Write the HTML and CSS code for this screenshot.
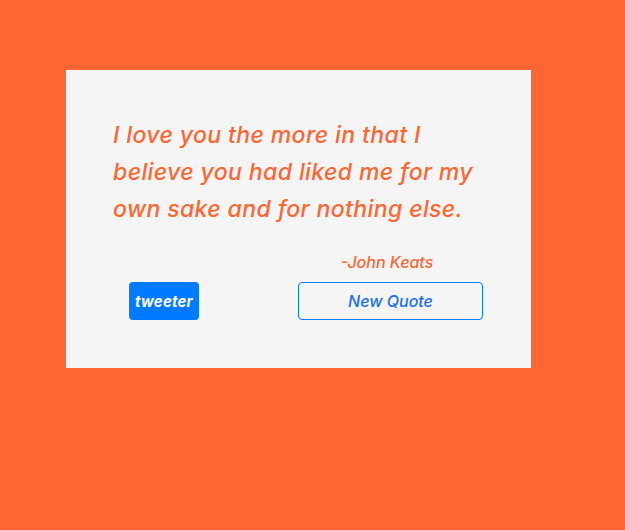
FILE: index.html
```html
<!DOCTYPE html>
<html>
<head>
<meta charset="utf-8">
<link rel="stylesheet" href="styles.css">
</head>
<body>
<div class="card">
  <p class="quote">I love you the more in that I<br>believe you had liked me for my<br>own sake and for nothing else.</p>
  <div class="footer">
    <a class="tweet">tweeter</a>
    <div class="right">
      <div class="author">-John Keats</div>
      <button class="new">New Quote</button>
    </div>
  </div>
</div>
</body>
</html>
```
FILE: styles.css
```css
html, body {
  margin: 0;
  background: #ff6633;
  height: 100%;
}
body {
  padding: 70px 0 0 66px;
  box-sizing: border-box;
  font-family: Inter, Roboto, sans-serif;
  font-style: italic;
}
.card {
  width: 465px;
  height: 298px;
  box-sizing: border-box;
  background: #f5f5f5;
  padding: 47px 0 0 47px;
}
.quote {
  margin: 0;
  color: #ff6633;
  font-size: 23px;
  line-height: 37px;
  font-weight: 500;
  letter-spacing: 0.4px;
}
.footer {
  display: flex;
  align-items: flex-end;
  margin-top: 23px;
}
.tweet {
  margin-left: 16px;
  width: 70px;
  height: 38px;
  box-sizing: border-box;
  background: #007bff;
  border-radius: 4px;
  color: #fff;
  font-weight: 700;
  font-size: 15px;
  letter-spacing: 0.2px;
  display: flex;
  align-items: center;
  justify-content: center;
}
.right {
  margin-left: 99px;
  width: 185px;
  display: flex;
  flex-direction: column;
  align-items: center;
}
.author {
  color: #ff6633;
  font-size: 16px;
  line-height: 22px;
  font-weight: 500;
  margin-bottom: 9px;
  padding-right: 7px;
}
.new {
  width: 185px;
  height: 38px;
  box-sizing: border-box;
  border: 1px solid #007bff;
  border-radius: 4px;
  background: transparent;
  color: #1a6ff0;
  font-family: inherit;
  font-style: italic;
  font-weight: 500;
  font-size: 16px;
  padding: 0;
}
```
